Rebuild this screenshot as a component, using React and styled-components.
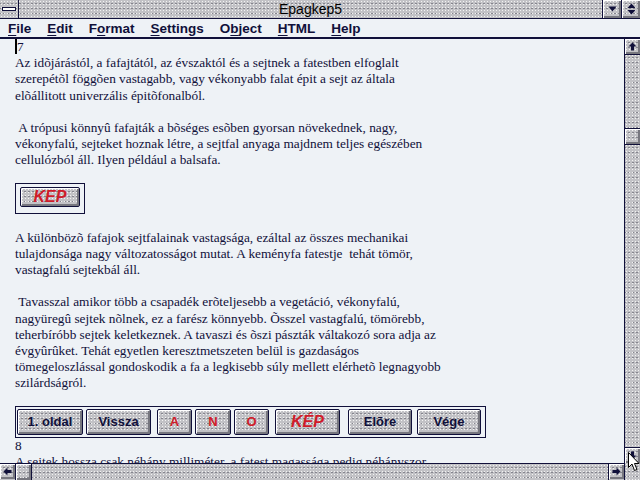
import React from "react";
import styled, { createGlobalStyle, css } from "styled-components";

const GlobalStyle = createGlobalStyle`
  html, body {
    margin: 0;
    padding: 0;
    overflow: hidden;
    background: #eef2f6;
  }
`;

const navy = "#10103a";

const dither = css`
  background-color: #c2c2c6;
  background-image: radial-gradient(circle, #f2f2f2 0.6px, transparent 0.9px),
    radial-gradient(circle, #85858e 0.6px, transparent 0.9px);
  background-size: 3px 3px, 4px 5px;
  background-position: 0 0, 2px 1px;
`;

const bevel = css`
  ${dither};
  box-shadow: inset 1px 1px 0 #ffffff, inset -2px -2px 0 #77777f;
`;

const Window = styled.div`
  position: relative;
  width: 640px;
  height: 480px;
  display: flex;
  flex-direction: column;
  background: #eef2f6;
  overflow: hidden;
`;

const TitleBar = styled.div`
  height: 18px;
  display: flex;
  border-bottom: 1px solid ${navy};
  ${dither};
`;

const SysMenu = styled.div`
  width: 18px;
  border-right: 1px solid ${navy};
  display: flex;
  align-items: center;
  justify-content: center;
  ${dither};

  span {
    display: block;
    width: 12px;
    height: 2px;
    background: #ffffff;
    border: 1px solid ${navy};
  }
`;

const Title = styled.div`
  flex: 1;
  text-align: center;
  font-family: "Liberation Sans", Arial, sans-serif;
  font-size: 14px;
  line-height: 18px;
  color: #000;
`;

const CapButton = styled.div`
  width: 18px;
  height: 18px;
  border-left: 1px solid ${navy};
  display: flex;
  align-items: center;
  justify-content: center;
  ${bevel};
`;

const MenuBar = styled.div`
  height: 18px;
  display: flex;
  align-items: center;
  border-bottom: 2px solid ${navy};
  background: #eef2f6;
`;

const MenuItem = styled.div`
  padding: 0 8px;
  font-family: "Liberation Sans", Arial, sans-serif;
  font-weight: bold;
  font-size: 13.5px;
  color: ${navy};

  u {
    text-decoration: underline;
    text-underline-offset: 2px;
  }
`;

const Main = styled.div`
  flex: 1;
  display: grid;
  grid-template-columns: 1fr 16px;
  grid-template-rows: 1fr 17px;
  min-height: 0;
`;

const Content = styled.div`
  overflow: hidden;
  padding: 0 0 0 15px;
  font-family: "Liberation Serif", "Times New Roman", serif;
  font-size: 13.3px;
  line-height: 16.2px;
  color: ${navy};
  white-space: nowrap;
`;

const Para = styled.div`
  margin-top: ${(p) => p.$top || 0}px;
`;

const Caret = styled.span`
  display: inline-block;
  width: 2px;
  height: 15px;
  background: #000;
  vertical-align: -3px;
`;

const Frame = styled.div`
  display: inline-flex;
  align-items: center;
  border: 1px solid ${navy};
  padding: ${(p) => p.$pad};
  margin-top: ${(p) => p.$top}px;
`;

const NavButton = styled.div`
  width: ${(p) => p.$w}px;
  height: ${(p) => p.$h || 26}px;
  margin-left: ${(p) => p.$ml || 0}px;
  box-sizing: border-box;
  border: 1px solid ${navy};
  border-radius: 2px;
  display: flex;
  align-items: center;
  justify-content: center;
  font-family: "Liberation Sans", Arial, sans-serif;
  font-weight: bold;
  font-size: ${(p) => (p.$big ? 16 : 13)}px;
  font-style: ${(p) => (p.$big ? "italic" : "normal")};
  color: ${(p) => (p.$red ? "#d01c2a" : navy)};
  ${bevel};
`;

const VScroll = styled.div`
  border-left: 1px solid ${navy};
  display: flex;
  flex-direction: column;
  ${dither};
`;

const ArrowBox = styled.div`
  width: 15px;
  height: 15px;
  flex: none;
  display: flex;
  align-items: center;
  justify-content: center;
  box-sizing: border-box;
  ${bevel};
`;

const VTrack = styled.div`
  flex: 1;
  border-top: 1px solid ${navy};
  border-bottom: 1px solid ${navy};
`;

const VThumb = styled.div`
  width: 15px;
  height: 15px;
  margin-top: 73px;
  border-top: 1px solid ${navy};
  border-bottom: 1px solid ${navy};
  ${bevel};
`;

const HScroll = styled.div`
  border-top: 1px solid ${navy};
  display: flex;
  ${dither};
`;

const HThumb = styled.div`
  width: 15px;
  border-left: 1px solid ${navy};
  border-right: 1px solid ${navy};
  ${bevel};
`;

const HTrack = styled.div`
  flex: 1;
  border-right: 1px solid ${navy};
`;

const Corner = styled.div`
  border-left: 1px solid ${navy};
  ${dither};
`;

const Pointer = styled.svg`
  position: absolute;
  left: 628px;
  top: 452px;
`;

const Arrow = ({ dir }) => {
  const rot = { up: 0, right: 90, down: 180, left: 270 }[dir];
  return (
    <svg width="9" height="9" viewBox="0 0 9 9">
      <path
        d="M4.5 0.5 L8.5 4.5 L6 4.5 L6 8.5 L3 8.5 L3 4.5 L0.5 4.5 Z"
        fill={navy}
        transform={`rotate(${rot} 4.5 4.5)`}
      />
    </svg>
  );
};

const menus = [
  ["F", "ile"],
  ["E", "dit"],
  ["F", "o", "rmat"],
  ["S", "ettings"],
  ["O", "b", "ject"],
  ["H", "TML"],
  ["H", "elp"],
];

const navButtons = [
  { label: "1. oldal", w: 66 },
  { label: "Vissza", w: 65, ml: 3 },
  { label: "A", w: 35, ml: 6, red: true },
  { label: "N", w: 36, ml: 3, red: true },
  { label: "O", w: 35, ml: 3, red: true },
  { label: "KÉP", w: 65, ml: 6, red: true, big: true },
  { label: "Elõre", w: 64, ml: 8 },
  { label: "Vége", w: 64, ml: 5 },
];

export default function App() {
  return (
    <Window>
      <GlobalStyle />
      <TitleBar>
        <SysMenu>
          <span />
        </SysMenu>
        <Title>Epagkep5</Title>
        <CapButton>
          <svg width="9" height="6" viewBox="0 0 9 6">
            <path d="M0.5 0.5 L8.5 0.5 L4.5 5.5 Z" fill={navy} />
          </svg>
        </CapButton>
        <CapButton>
          <svg width="9" height="12" viewBox="0 0 9 12">
            <path d="M4.5 0.5 L8.5 5 L0.5 5 Z M0.5 7 L8.5 7 L4.5 11.5 Z" fill={navy} />
          </svg>
        </CapButton>
      </TitleBar>

      <MenuBar>
        {menus.map((m, i) =>
          m.length === 2 ? (
            <MenuItem key={i}>
              <u>{m[0]}</u>
              {m[1]}
            </MenuItem>
          ) : (
            <MenuItem key={i}>
              {m[0]}
              <u>{m[1]}</u>
              {m[2]}
            </MenuItem>
          )
        )}
      </MenuBar>

      <Main>
        <Content>
          <Para>
            <Caret />7
          </Para>
          <Para>
            Az idõjárástól, a fafajtától, az évszaktól és a sejtnek a fatestben elfoglalt
            <br />
            szerepétõl föggõen vastagabb, vagy vékonyabb falat épit a sejt az általa
            <br />
            elõállitott univerzális épitõfonalból.
          </Para>
          <Para $top={16.2}>
            &nbsp;A trópusi könnyû fafajták a bõséges esõben gyorsan növekednek, nagy,
            <br />
            vékonyfalú, sejteket hoznak létre, a sejtfal anyaga majdnem teljes egészében
            <br />
            cellulózból áll. Ilyen például a balsafa.
          </Para>
          <Frame $pad="3px 4px 6px 4px" $top={14}>
            <NavButton $w={60} $h={20} $red $big>
              KEP
            </NavButton>
          </Frame>
          <Para $top={16}>
            A különbözõ fafajok sejtfalainak vastagsága, ezáltal az összes mechanikai
            <br />
            tulajdonsága nagy változatosságot mutat. A keményfa fatestje&nbsp; tehát tömör,
            <br />
            vastagfalú sejtekbál áll.
          </Para>
          <Para $top={16.2}>
            &nbsp;Tavasszal amikor több a csapadék erõteljesebb a vegetáció, vékonyfalú,
            <br />
            nagyüregû sejtek nõlnek, ez a farész könnyebb. Õsszel vastagfalú, tömörebb,
            <br />
            teherbíróbb sejtek keletkeznek. A tavaszi és õszi pászták váltakozó sora adja az
            <br />
            évgyûrûket. Tehát egyetlen keresztmetszeten belül is gazdaságos
            <br />
            tömegeloszlással gondoskodik a fa a legkisebb súly mellett elérhetõ legnagyobb
            <br />
            szilárdságról.
          </Para>
          <Frame $pad="2px 4px 2px 1px" $top={14}>
            {navButtons.map((b) => (
              <NavButton key={b.label} $w={b.w} $ml={b.ml} $red={b.red} $big={b.big}>
                {b.label}
              </NavButton>
            ))}
          </Frame>
          <Para>8</Para>
          <Para>
            A sejtek hossza csak néhány milliméter, a fatest magassága pedig néhányszor
          </Para>
        </Content>

        <VScroll>
          <ArrowBox>
            <Arrow dir="up" />
          </ArrowBox>
          <VTrack>
            <VThumb />
          </VTrack>
          <ArrowBox>
            <Arrow dir="down" />
          </ArrowBox>
        </VScroll>

        <HScroll>
          <ArrowBox>
            <Arrow dir="left" />
          </ArrowBox>
          <HThumb />
          <HTrack />
          <ArrowBox>
            <Arrow dir="right" />
          </ArrowBox>
        </HScroll>
        <Corner />
      </Main>

      <Pointer width="12" height="20" viewBox="0 0 12 20">
        <path
          d="M0.5 0.5 L0.5 15.5 L4 12 L6.5 18.5 L9 17.5 L6.5 11.5 L11 11.5 Z"
          fill="#ffffff"
          stroke="#000000"
          strokeWidth="1"
        />
      </Pointer>
    </Window>
  );
}
